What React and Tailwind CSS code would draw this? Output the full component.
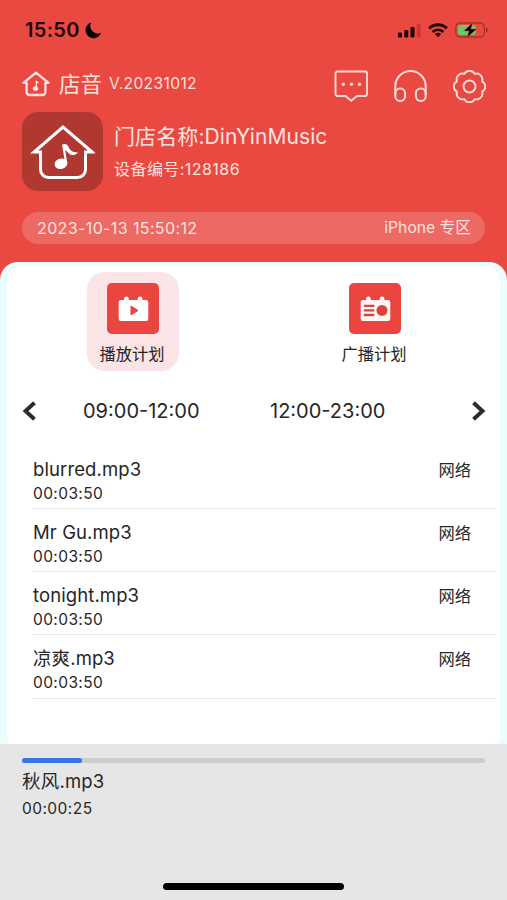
const tracks = [
  { name: "blurred.mp3", time: "00:03:50", source: "网络" },
  { name: "Mr Gu.mp3", time: "00:03:50", source: "网络" },
  { name: "tonight.mp3", time: "00:03:50", source: "网络" },
  { name: "凉爽.mp3", time: "00:03:50", source: "网络" },
];

const current = { name: "秋风.mp3", time: "00:00:25", progress: 12.9 };

function HouseLogo() {
  return (
    <svg width="28" height="26" viewBox="0 0 28 26" fill="none" className="text-[#fde3df]">
      <path
        d="M4.600 11.800H1.500L14 1.700l12.500 10.100h-3.100v9.200a3 3 0 0 1-3 3H7.600a3 3 0 0 1-3-3z"
        stroke="currentColor"
        strokeWidth="2.300"
        strokeLinejoin="round"
      />
      <ellipse cx="13.500" cy="17.500" rx="2.700" ry="2.300" fill="currentColor" />
      <path d="M14.300 17.300V9.800c.3 1.300 1.500 1.300 2.200 2.300" stroke="currentColor" strokeWidth="1.300" />
    </svg>
  );
}

function StoreAvatar() {
  return (
    <div className="flex h-[79px] w-[81px] shrink-0 items-center justify-center rounded-2xl bg-[#b03831]">
      <svg width="65" height="56" viewBox="0 0 65 56" fill="none" stroke="white">
        <path
          d="M10.500 28H4L33 3l29 25h-6.500v17.500a8 8 0 0 1-8 8h-29a8 8 0 0 1-8-8z"
          strokeWidth="3"
          strokeLinejoin="miter"
        />
        <ellipse cx="31" cy="39.700" rx="6.500" ry="5.200" transform="rotate(-15 31 39.700)" fill="white" stroke="none" />
        <path d="M36.200 39.500 33.300 21" strokeWidth="2.200" />
        <path
          d="M32.200 20.500c3-1.300 5.300-.5 6.300 2.300 1 3 3.500 5.700 9.500 5.700-2.500 3-6.500 3.300-9 1.200-2-1.800-3-4.200-5.500-4.200z"
          fill="white"
          stroke="none"
        />
      </svg>
    </div>
  );
}

function StatusBar() {
  return (
    <div className="flex h-6 items-center pl-[25px] pr-[19px] text-[#200505]">
      <span className="text-[20px] font-semibold leading-6 tracking-[0.3px]">15:50</span>
      <svg width="17" height="17" viewBox="0 0 17 17" className="ml-[5px]">
        <path d="M6 .6A8 8 0 1 0 16 11 7.800 7.800 0 0 1 6 .6z" fill="black" />
      </svg>
      <div className="ml-auto flex items-center">
        <svg width="23" height="15" viewBox="0 0 23 15" fill="currentColor">
          <rect x="0" y="9.500" width="4" height="5" rx="1.300" />
          <rect x="6.300" y="7" width="4" height="7.500" rx="1.300" />
          <rect x="12.500" y="4" width="4" height="10.500" rx="1.300" />
          <rect x="18.800" y="1" width="3.800" height="13.500" rx="1.300" fill="#c23a33" />
        </svg>
        <svg width="20" height="15" viewBox="0 0 20 15" fill="none" className="ml-[7px]">
          <path d="M1.200 5.400a12.500 12.500 0 0 1 17.600 0" stroke="currentColor" strokeWidth="2.900" />
          <path d="M4.500 9a8 8 0 0 1 11 0" stroke="currentColor" strokeWidth="2.600" />
          <path d="M10 14.300l-3.200-3.200a4.600 4.600 0 0 1 6.400 0z" fill="currentColor" />
        </svg>
        <svg width="33" height="16" viewBox="0 0 33 16" fill="none" className="ml-[7px]">
          <rect x="0.800" y="1" width="28.500" height="14" rx="4" stroke="#a8332a" strokeWidth="1.300" />
          <rect x="2.700" y="3" width="18" height="10" rx="2.300" fill="#6cc868" />
          <path d="M31 5.500c2 .8 2 4.200 0 5z" fill="#8c241d" />
          <path d="M17.800.5 8.800 9h5.200l-1.800 6.500L21.500 7h-5.700z" fill="black" stroke="#dc4a3c" strokeWidth=".5" />
        </svg>
      </div>
    </div>
  );
}

function HeaderActions() {
  return (
    <div className="flex items-center gap-[26px] text-[#fddcd8]">
      <svg width="34" height="32" viewBox="0 0 34 32" fill="none" stroke="currentColor" strokeWidth="1.900">
        <path
          d="M3.500 1.500h27.500a2 2 0 0 1 2 2v20.500a2 2 0 0 1-2 2h-8L17.200 30.700 11.500 26h-8a2 2 0 0 1-2-2V3.500a2 2 0 0 1 2-2z"
          strokeLinejoin="round"
        />
        <g fill="currentColor" stroke="none">
          <circle cx="9.300" cy="14.200" r="1.700" />
          <circle cx="17.400" cy="14.200" r="1.700" />
          <circle cx="25.500" cy="14.200" r="1.700" />
        </g>
      </svg>
      <svg width="33" height="32" viewBox="0 0 33 32" fill="none" stroke="currentColor" strokeWidth="2">
        <path d="M1.300 25V16.300a15.200 15.200 0 0 1 30.400 0V25" />
        <rect x="1.300" y="18.500" width="9.800" height="12.400" rx="4.700" />
        <rect x="21.900" y="18.500" width="9.800" height="12.400" rx="4.700" />
      </svg>
      <svg width="33" height="33" viewBox="0 0 33 33" fill="none" stroke="currentColor" strokeWidth="1.900">
        <path
          d="M29.070 11.300A5.800 5.800 0 0 1 29.070 21.700A5.800 5.800 0 0 1 21.700 29.070A5.800 5.800 0 0 1 11.300 29.070A5.800 5.800 0 0 1 3.930 21.700A5.800 5.800 0 0 1 3.930 11.300A5.800 5.800 0 0 1 11.300 3.930A5.800 5.800 0 0 1 21.700 3.930A5.800 5.800 0 0 1 29.070 11.300Z"
          strokeLinejoin="round"
        />
        <circle cx="16.500" cy="16.500" r="6" />
      </svg>
    </div>
  );
}

function PlayPlanIcon() {
  return (
    <svg width="31" height="26" viewBox="0 0 31 26">
      <path
        d="M3 4h3V3a2.200 2.200 0 0 1 4.800 0v1h8.900V3a2.200 2.200 0 0 1 4.800 0v1H28a2.300 2.300 0 0 1 2.300 2.300v16.400A2.300 2.300 0 0 1 28 25H3a2.300 2.300 0 0 1-2.300-2.300V6.300A2.300 2.300 0 0 1 3 4z"
        fill="white"
      />
      <path d="M13 10l7 4.500-7 4.500z" fill="#ea453e" stroke="#ea453e" strokeLinejoin="round" />
    </svg>
  );
}

function BroadcastPlanIcon() {
  return (
    <svg width="31" height="26" viewBox="0 0 31 26">
      <path
        d="M3 4h3V3a2.200 2.200 0 0 1 4.800 0v1h8.900V3a2.200 2.200 0 0 1 4.800 0v1H28a2.300 2.300 0 0 1 2.300 2.300v16.400A2.300 2.300 0 0 1 28 25H3a2.300 2.300 0 0 1-2.300-2.300V6.300A2.300 2.300 0 0 1 3 4z"
        fill="#fff7f5"
      />
      <path d="M3.800 9.800h10.500M3.800 14.400h10.500M3.800 19h10.500" stroke="#d9453f" strokeWidth="2.300" />
      <circle cx="22" cy="14.400" r="5.500" fill="#e0423b" />
    </svg>
  );
}

function PlanTab({ label, active, children }) {
  return (
    <button
      className={`flex h-[99px] w-[92px] flex-col items-center rounded-[18px] pt-[11px] ${
        active ? "bg-[#fbe4e5]" : ""
      }`}
    >
      <span className="flex h-[51px] w-[52px] items-center justify-center rounded-[5px] bg-[#ea453e]">
        {children}
      </span>
      <span className="mt-[10px] pr-[2px] text-[16.300px] leading-5 text-[#262222]">{label}</span>
    </button>
  );
}

function TrackRow({ track }) {
  return (
    <li className="flex h-[63.300px] items-start justify-between border-b border-[#e6e6e6] pr-[26px] pt-[11px]">
      <div>
        <div className="text-[18.500px] leading-6 tracking-[0.1px]">{track.name}</div>
        <div className="mt-[2px] text-[15.500px] leading-[22px] tracking-[0.4px]">{track.time}</div>
      </div>
      <span className="pt-px text-[16.300px] leading-6">{track.source}</span>
    </li>
  );
}

export default function App() {
  return (
    <div className="flex h-[900px] w-full flex-col overflow-hidden bg-[#ea4942] font-['Inter','Noto_Sans_CJK_SC',sans-serif] text-[#262626]">
      <header className="h-[262px] shrink-0 pt-[18px] text-[#fde3df]">
        <StatusBar />

        <div className="mt-[26px] flex h-9 items-center pl-[22px] pr-[21px]">
          <div className="-mt-1 flex items-center">
            <HouseLogo />
            <span className="ml-[9px] text-[21.500px] leading-8">店音</span>
            <span className="ml-[7px] text-[15.500px] leading-8 tracking-[0.42px]">V.20231012</span>
          </div>
          <div className="ml-auto">
            <HeaderActions />
          </div>
        </div>

        <div className="mt-2 flex pl-[22px]">
          <StoreAvatar />
          <div className="ml-[11px] pt-[9px]">
            <div className="text-[21px] leading-8 tracking-[0.1px]">门店名称:DinYinMusic</div>
            <div className="mt-[4px] text-[16px] leading-6 tracking-[0.45px]">设备编号:128186</div>
          </div>
        </div>

        <div className="mx-[22px] mt-[21px] flex h-8 items-center justify-between rounded-full bg-[#ec6964] pl-[15px] pr-[14px]">
          <span className="text-[16px] tracking-[0.38px]">2023-10-13 15:50:12</span>
          <span className="text-[15.700px]">iPhone 专区</span>
        </div>
      </header>

      <main className="flex h-[482px] shrink-0 flex-col rounded-t-[18px] bg-[#ebfdfd] px-[7px] pt-1">
        <div className="flex-1 rounded-t-[14px] rounded-b-md bg-white pt-[6px]">
          <div className="flex gap-[150px] pl-[80px]">
            <PlanTab label="播放计划" active>
              <PlayPlanIcon />
            </PlanTab>
            <PlanTab label="广播计划">
              <BroadcastPlanIcon />
            </PlanTab>
          </div>

          <div className="mt-[25px] flex h-[30px] items-center pl-[15px] pr-[14px] text-[20px]">
            <svg width="15" height="20" viewBox="0 0 15 20" fill="none" stroke="#2b2b2b" strokeWidth="3.900">
              <path d="M12.500 1.700 3.500 10l9 8.300" />
            </svg>
            <span className="ml-[46px] w-[187px]">09:00-12:00</span>
            <span>12:00-23:00</span>
            <svg width="15" height="20" viewBox="0 0 15 20" fill="none" stroke="#2b2b2b" strokeWidth="3.900" className="ml-auto">
              <path d="M2.500 1.700 11.500 10l-9 8.300" />
            </svg>
          </div>

          <ul className="ml-[26px] mr-[3px] mt-[19.500px]">
            {tracks.map((track) => (
              <TrackRow key={track.name} track={track} />
            ))}
          </ul>
        </div>
      </main>

      <footer className="flex flex-1 flex-col bg-[#e6e6e6] px-[22px] pb-[10px] pt-[14px]">
        <div className="h-[5px] rounded-full bg-[#cdcdcd]">
          <div className="h-full rounded-full bg-[#3a75e6]" style={{ width: `${current.progress}%` }} />
        </div>
        <div className="mt-[6px] text-[18.500px] leading-6 tracking-[0.2px]">{current.name}</div>
        <div className="mt-1 text-[15.500px] leading-6 tracking-[0.45px]">{current.time}</div>
        <div className="mx-auto mt-auto h-[7px] w-[181px] rounded-full bg-black" />
      </footer>
    </div>
  );
}
